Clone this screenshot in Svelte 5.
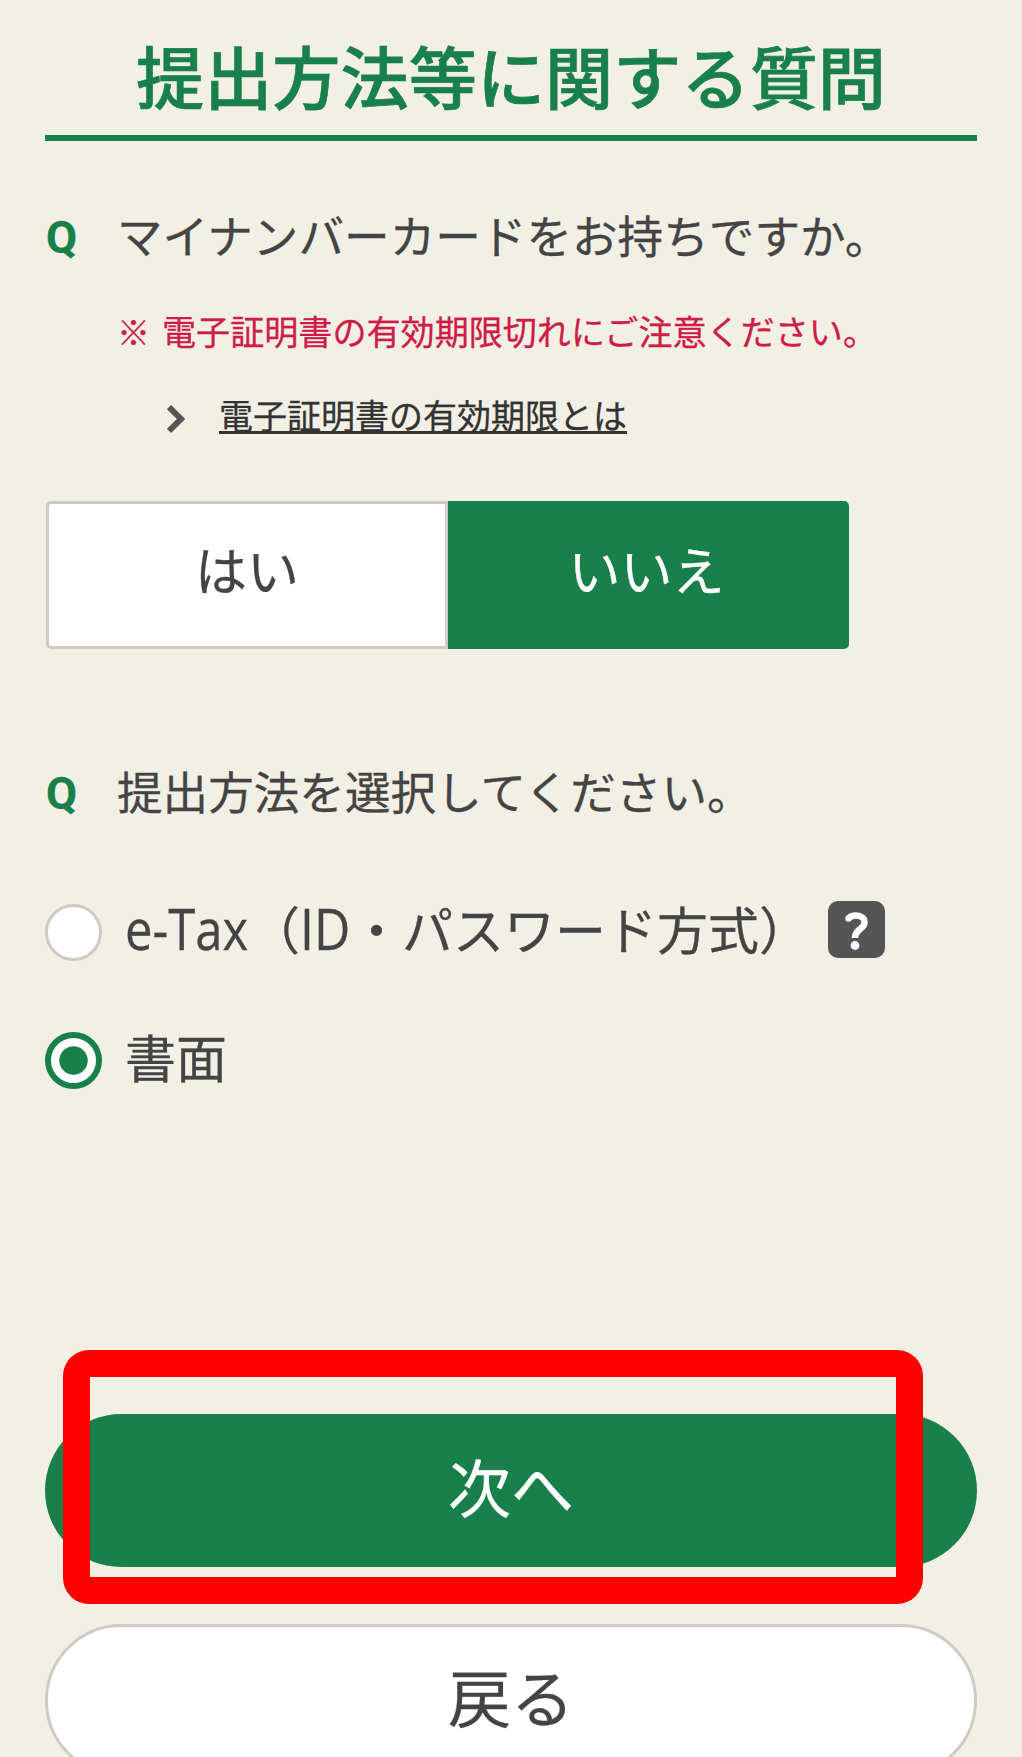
<script lang="ts">
  let hasCard = $state("no");
  let method = $state("paper");
</script>

<main class="page">
  <h1 class="title">提出方法等に関する質問</h1>

  <div class="question first">
    <span class="q-mark">Q</span>
    <span class="q-text">マイナンバーカードをお持ちですか。</span>
  </div>

  <p class="notice"><span class="notice-mark">※</span>電子証明書の有効期限切れにご注意ください。</p>

  <div class="help-link">
    <svg class="chevron" width="20" height="30" viewBox="0 0 20 30">
      <path d="M2 3L14 15L2 27" fill="none" stroke="#555" stroke-width="6" />
    </svg>
    <a href="#limit">電子証明書の有効期限とは</a>
  </div>

  <div class="segmented">
    <button class:selected={hasCard === "yes"} onclick={() => (hasCard = "yes")}>はい</button>
    <button class:selected={hasCard === "no"} onclick={() => (hasCard = "no")}>いいえ</button>
  </div>

  <div class="question second">
    <span class="q-mark">Q</span>
    <span class="q-text">提出方法を選択してください。</span>
  </div>

  <div class="option etax">
    <label>
      <input type="radio" name="method" value="etax" bind:group={method} />
      <span class="radio"></span>
      <span class="option-text"><span class="latin tax"><span>e-Tax</span></span>（<span class="latin id"><span>ID</span></span>・パスワード方式）</span>
    </label>
    <button class="help" aria-label="ヘルプ">
      <svg width="57" height="57" viewBox="0 0 57 57">
        <path
          d="M20.5 17.5C23 14.5 26 14.5 28 14.5C33 14.5 36.5 17 36.5 21.5C36.5 28.5 27 27.5 27 37"
          fill="none"
          stroke="#fff"
          stroke-width="6.5"
        />
        <circle cx="20.5" cy="17.5" r="3.2" fill="#fff" />
        <circle cx="27" cy="44.5" r="4.4" fill="#fff" />
      </svg>
    </button>
  </div>

  <div class="option paper">
    <label>
      <input type="radio" name="method" value="paper" bind:group={method} />
      <span class="radio"></span>
      <span class="option-text">書面</span>
    </label>
  </div>

  <div class="next-wrap">
    <button class="btn next">次へ</button>
    <div class="marker"></div>
  </div>
  <button class="btn back">戻る</button>
</main>

<style>
  :global(body) {
    background: #f2f0e4;
  }

  .page {
    box-sizing: border-box;
    height: 1757px;
    padding: 0 45px;
    overflow: hidden;
    display: flex;
    flex-direction: column;
    background: #f2f0e4;
    color: #444;
    font-family: "Noto Sans CJK JP", sans-serif;
    -webkit-text-stroke: 0.3px currentColor;
  }

  button {
    font-family: inherit;
    padding: 0;
    border: 0;
    cursor: pointer;
  }

  .title {
    flex: none;
    margin: 0;
    padding-top: 14px;
    border-bottom: 6px solid #19804b;
    color: #19804b;
    font-size: 68.2px;
    font-weight: 500;
    line-height: 121px;
    text-align: center;
    white-space: nowrap;
    -webkit-text-stroke: 0.7px #19804b;
  }

  .question {
    flex: none;
    display: flex;
    align-items: center;
    height: 60px;
    line-height: 60px;
    white-space: nowrap;
  }

  .first {
    margin-top: 63px;
  }

  .second {
    margin-top: 111px;
  }

  .q-mark {
    width: 72px;
    padding: 8px 0 0 1px;
    box-sizing: border-box;
    color: #19804b;
    font-family: Roboto, sans-serif;
    font-size: 45px;
    font-weight: 700;
  }

  .q-text {
    font-size: 45.6px;
  }

  .notice {
    flex: none;
    margin: 41px 0 0 72px;
    height: 50px;
    line-height: 50px;
    font-size: 34.1px;
    color: #cf1b48;
    white-space: nowrap;
  }

  .notice-mark {
    display: inline-block;
    width: 45px;
    font-size: 33px;
  }

  .help-link {
    flex: none;
    display: flex;
    align-items: center;
    margin: 35px 0 0 122px;
    height: 50px;
    line-height: 50px;
    font-size: 34px;
  }

  .chevron {
    margin: 8px 32px 0 0;
  }

  .help-link a {
    color: #333;
    text-decoration: underline;
    text-decoration-thickness: 3px;
    text-underline-offset: 2px;
    text-decoration-skip-ink: none;
  }

  .segmented {
    flex: none;
    display: grid;
    grid-template-columns: 402px 401px;
    height: 148px;
    margin: 61px 0 0 1px;
  }

  .segmented button {
    background: #fff;
    border: 3px solid #d0cac2;
    border-radius: 5px 0 0 5px;
    color: #444;
    font-size: 52px;
    line-height: 1;
    padding-bottom: 12px;
  }

  .segmented button + button {
    border-radius: 0 5px 5px 0;
    padding-right: 4px;
  }

  .segmented .selected {
    background: #19804b;
    border-color: #19804b;
    color: #fff;
  }

  .option {
    flex: none;
    display: flex;
    align-items: center;
    height: 58px;
  }

  .etax {
    margin-top: 83px;
  }

  .paper {
    margin-top: 70px;
  }

  .option label {
    display: flex;
    align-items: center;
  }

  .option input {
    position: absolute;
    opacity: 0;
  }

  .radio {
    box-sizing: border-box;
    width: 57px;
    height: 57px;
    margin-right: 23px;
    border: 3px solid #d0cac2;
    border-radius: 50%;
    background: #fff;
  }

  input:checked + .radio {
    border: 6px solid #19804b;
    background: radial-gradient(circle, #19804b 13.8px, #fff 14.6px);
  }

  .option-text {
    font-size: 51px;
    line-height: 58px;
    margin-top: -9px;
    white-space: nowrap;
  }

  /* condensed latin letters inside the japanese label */
  .latin {
    display: inline-block;
    font-family: "Open Sans", sans-serif;
    font-size: 57px;
    line-height: 58px;
  }

  .latin span {
    display: inline-block;
    transform-origin: left;
  }

  .tax {
    width: 124px;
  }

  .tax span {
    transform: scaleX(0.86);
  }

  .id {
    width: 51px;
  }

  .id span {
    transform: scaleX(0.88);
  }

  .help {
    width: 57px;
    height: 57px;
    margin: -5px 0 0 18px;
    border-radius: 10px;
    background: #555;
  }

  .help svg {
    display: block;
  }

  .next-wrap {
    position: relative;
    flex: none;
    margin-top: 325px;
  }

  .btn {
    flex: none;
    box-sizing: border-box;
    display: block;
    width: 100%;
    height: 153px;
    border-radius: 77px;
    font-size: 63px;
    line-height: 1;
    padding-bottom: 12px;
  }

  .next {
    background: #19804b;
    color: #fff;
  }

  /* highlight frame over the next button */
  .marker {
    position: absolute;
    box-sizing: border-box;
    left: 17.5px;
    top: -64.5px;
    width: 860px;
    height: 254px;
    border: 27px solid #f00;
    border-radius: 26px;
    pointer-events: none;
  }

  .back {
    margin-top: 57px;
    background: #fff;
    border: 3px solid #d0cac2;
    color: #444;
  }
</style>
